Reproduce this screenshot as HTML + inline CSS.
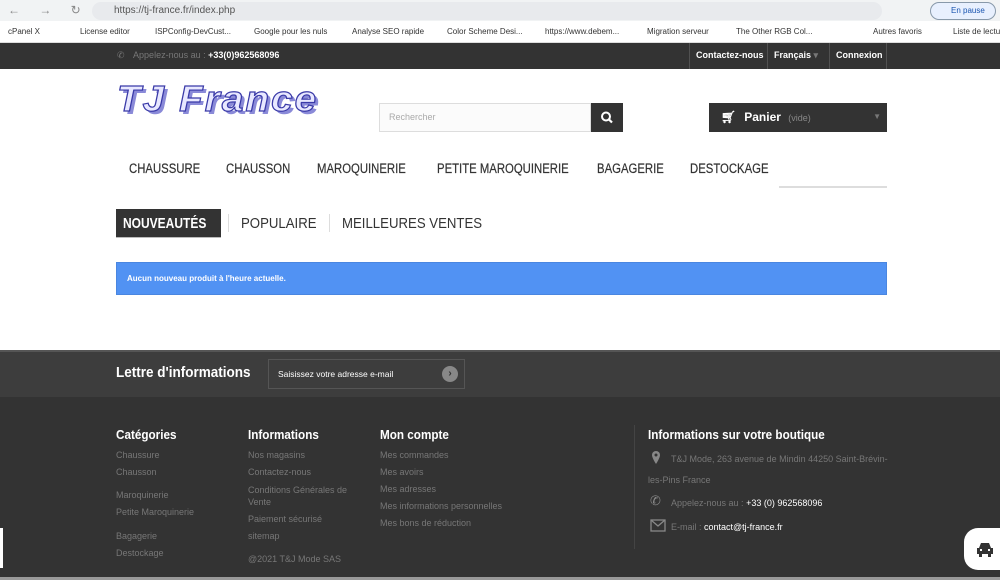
<!DOCTYPE html>
<html><head><meta charset="utf-8"><style>
*{margin:0;padding:0;box-sizing:border-box}
body{width:1000px;height:580px;overflow:hidden;font-family:"Liberation Sans",sans-serif;background:#fff;position:relative;font-size:11px}
.abs{position:absolute}
.chrome{top:0;left:0;width:1000px;height:21px;background:#f1f3f4}
.url{left:92px;top:2px;width:790px;height:18px;background:#e8eaed;border-radius:9px;color:#555;font-size:10px;line-height:18px;padding-left:22px}
.bm{top:21px;left:0;width:1000px;height:22px;background:#fff;border-bottom:1px solid #ddd;font-size:8px;color:#333;line-height:22px;white-space:nowrap}
.bm span{position:absolute}
.top{top:43px;left:0;width:1000px;height:26px;background:#333;color:#777;font-size:9px}
.top b{color:#fff}
.tn{position:absolute;top:0;height:26px;line-height:24px;color:#fff;font-weight:bold;font-size:9px;border-left:1px solid #515151;padding:0 6px;white-space:nowrap}
.logo{left:117px;top:78px;font-size:36px;font-style:italic;font-weight:bold;color:#e8e8ff;-webkit-text-stroke:1.2px #3a3aa8;text-shadow:3px 3px 0 #8a8ad8;letter-spacing:2px;transform:scaleX(1.07);transform-origin:left}
.search{left:379px;top:103px;width:212px;height:29px;border:1px solid #ddd;background:#fbfbfb;color:#aaa;font-size:9px;line-height:27px;padding-left:9px}
.sbtn{left:591px;top:103px;width:32px;height:29px;background:#333}
.cart{left:709px;top:103px;width:178px;height:29px;background:#333;color:#fff;font-weight:bold;font-size:12px;line-height:28px}
.menu{top:161px;font-size:13.5px;color:#333;transform:scaleX(.84);transform-origin:left;white-space:nowrap;-webkit-text-stroke:.2px #333}
.tab{top:209px;height:29px;font-size:15px;color:#333;line-height:29px;white-space:nowrap}
.tab span{display:inline-block;transform:scaleX(.88);transform-origin:left}
.info{left:116px;top:262px;width:771px;height:33px;background:#5192f3;border:1px solid #4a86e0;color:#fff;font-size:8px;font-weight:bold;line-height:31px;padding-left:10px}
.news{top:350px;left:0;width:1000px;height:47px;background:#3d3d3d;border-top:2px solid #555}
.foot{top:397px;left:0;width:1000px;height:183px;background:#333}
.fh{position:absolute;top:30px;color:#fff;font-weight:bold;font-size:13px;transform:scaleX(.9);transform-origin:left;white-space:nowrap}
.fl{position:absolute;color:#777;font-size:9px;white-space:nowrap}
</style></head><body>
<div class="abs chrome"><div class="abs" style="left:8px;top:3px;color:#888;font-size:12px;letter-spacing:8px">← → ↻ ⌂</div>
<div class="abs url">https://tj-france.fr/index.php</div>
<div class="abs" style="left:930px;top:2px;width:66px;height:18px;border:1px solid #89a;border-radius:9px;background:#e8f0fe;font-size:8px;color:#1a55b0;line-height:16px;padding-left:20px">En pause</div></div>
<div class="abs bm"><span style="left:8px">cPanel X</span><span style="left:80px">License editor</span><span style="left:155px">ISPConfig-DevCust...</span><span style="left:254px">Google pour les nuls</span><span style="left:352px">Analyse SEO rapide</span><span style="left:447px">Color Scheme Desi...</span><span style="left:545px">https://www.debem...</span><span style="left:647px">Migration serveur</span><span style="left:736px">The Other RGB Col...</span><span style="left:873px">Autres favoris</span><span style="left:953px">Liste de lecture</span></div>
<div class="abs top"><div class="abs" style="left:117px;top:7px">✆ <span style="margin-left:6px">Appelez-nous au : </span><b>+33(0)962568096</b></div>
<div class="tn" style="left:689px;width:78px">Contactez-nous</div><div class="tn" style="left:767px;width:62px">Français <span style="color:#777">▾</span></div><div class="tn" style="left:829px;width:58px;border-right:1px solid #515151">Connexion</div></div>
<div class="abs logo">TJ France</div>
<div class="abs search">Rechercher</div>
<div class="abs sbtn"><svg width="32" height="29"><circle cx="15" cy="13.5" r="4" fill="none" stroke="#fff" stroke-width="2"/><line x1="18" y1="16.5" x2="21" y2="19.5" stroke="#fff" stroke-width="2.2"/></svg></div>
<div class="abs cart"><span style="margin-left:12px">🛒︎</span><span style="margin-left:8px">Panier</span> <span style="color:#888;font-weight:normal;font-size:9px;margin-left:4px">(vide)</span><span style="position:absolute;right:6px;color:#777;font-size:8px">▼</span></div>
<div class="abs menu" style="left:129px">CHAUSSURE</div><div class="abs menu" style="left:226px">CHAUSSON</div><div class="abs menu" style="left:317px">MAROQUINERIE</div><div class="abs menu" style="left:437px">PETITE MAROQUINERIE</div><div class="abs menu" style="left:597px">BAGAGERIE</div><div class="abs menu" style="left:690px">DESTOCKAGE</div>
<div class="abs" style="left:779px;top:186px;width:108px;height:2px;background:#ddd"></div>
<div class="abs tab" style="left:116px;width:105px;background:#333;color:#fff;padding-left:7px;border-bottom:1px solid #bbb;font-weight:bold;"><span style="transform:scaleX(.8)">NOUVEAUTÉS</span></div>
<div class="abs" style="left:228px;top:214px;width:1px;height:18px;background:#ddd"></div>
<div class="abs tab" style="left:241px"><span>POPULAIRE</span></div>
<div class="abs" style="left:329px;top:214px;width:1px;height:18px;background:#ddd"></div>
<div class="abs tab" style="left:342px"><span>MEILLEURES VENTES</span></div>
<div class="abs info">Aucun nouveau produit à l'heure actuelle.</div>
<div class="abs news"><div class="abs" style="left:116px;top:12px;color:#fff;font-weight:bold;font-size:15px;transform:scaleX(.9);transform-origin:left;white-space:nowrap">Lettre d'informations</div>
<div class="abs" style="left:268px;top:7px;width:197px;height:30px;border:1px solid #555;color:#fff;font-size:8.5px;line-height:28px;padding-left:9px">Saisissez votre adresse e-mail<div class="abs" style="right:6px;top:6px;width:16px;height:16px;border-radius:50%;background:#888;color:#333;font-size:10px;line-height:16px;text-align:center;font-weight:bold">›</div></div></div>
<div class="abs foot">
<div class="fh" style="left:116px">Catégories</div><div class="fh" style="left:248px">Informations</div><div class="fh" style="left:380px">Mon compte</div><div class="fh" style="left:648px">Informations sur votre boutique</div>
<div class="fl" style="left:116px;top:53px">Chaussure</div><div class="fl" style="left:116px;top:70px">Chausson</div><div class="fl" style="left:116px;top:93px">Maroquinerie</div><div class="fl" style="left:116px;top:110px">Petite Maroquinerie</div><div class="fl" style="left:116px;top:134px">Bagagerie</div><div class="fl" style="left:116px;top:151px">Destockage</div>
<div class="fl" style="left:248px;top:53px">Nos magasins</div><div class="fl" style="left:248px;top:70px">Contactez-nous</div><div class="fl" style="left:248px;top:87px;width:110px;line-height:12px;white-space:normal">Conditions Générales de Vente</div><div class="fl" style="left:248px;top:117px">Paiement sécurisé</div><div class="fl" style="left:248px;top:134px">sitemap</div><div class="fl" style="left:248px;top:157px">@2021 T&amp;J Mode SAS</div>
<div class="fl" style="left:380px;top:53px">Mes commandes</div><div class="fl" style="left:380px;top:70px">Mes avoirs</div><div class="fl" style="left:380px;top:87px">Mes adresses</div><div class="fl" style="left:380px;top:104px">Mes informations personnelles</div><div class="fl" style="left:380px;top:121px">Mes bons de réduction</div>
<div class="abs" style="left:634px;top:28px;width:1px;height:124px;background:#444"></div>
<svg class="abs" style="left:651px;top:53px" width="10" height="15"><path d="M5 1a4 4 0 0 0-4 4c0 3 4 9 4 9s4-6 4-9a4 4 0 0 0-4-4z" fill="#888"/><circle cx="5" cy="5" r="1.5" fill="#333"/></svg>
<div class="fl" style="left:671px;top:57px">T&amp;J Mode, 263 avenue de Mindin 44250 Saint-Brévin-</div><div class="fl" style="left:648px;top:78px">les-Pins France</div>
<div class="fl" style="left:650px;top:96px;color:#888;font-size:13px">✆</div><div class="fl" style="left:671px;top:101px">Appelez-nous au : <span style="color:#fff">+33 (0) 962568096</span></div>
<svg class="abs" style="left:650px;top:122px" width="16" height="13"><rect x="1" y="1" width="14" height="11" fill="none" stroke="#888" stroke-width="1.3"/><path d="M1 1l7 6 7-6" fill="none" stroke="#888" stroke-width="1.3"/></svg>
<div class="fl" style="left:671px;top:125px">E-mail : <span style="color:#fff">contact@tj-france.fr</span></div>
</div>
<div class="abs" style="left:964px;top:528px;width:40px;height:42px;background:#fff;border-radius:14px 0 0 14px"><svg class="abs" style="left:11px;top:12px" width="20" height="18"><path d="M4 8l2-5h8l2 5h2v6h-2v3h-3v-3H7v3H4v-3H2V8z" fill="#333"/><rect x="5" y="9" width="2" height="2" fill="#fff"/><rect x="13" y="9" width="2" height="2" fill="#fff"/></svg></div>
<div class="abs" style="left:0;top:528px;width:3px;height:40px;background:#fff"></div>
<div class="abs" style="left:0;top:577px;width:1000px;height:3px;background:#999"></div>
</body></html>
